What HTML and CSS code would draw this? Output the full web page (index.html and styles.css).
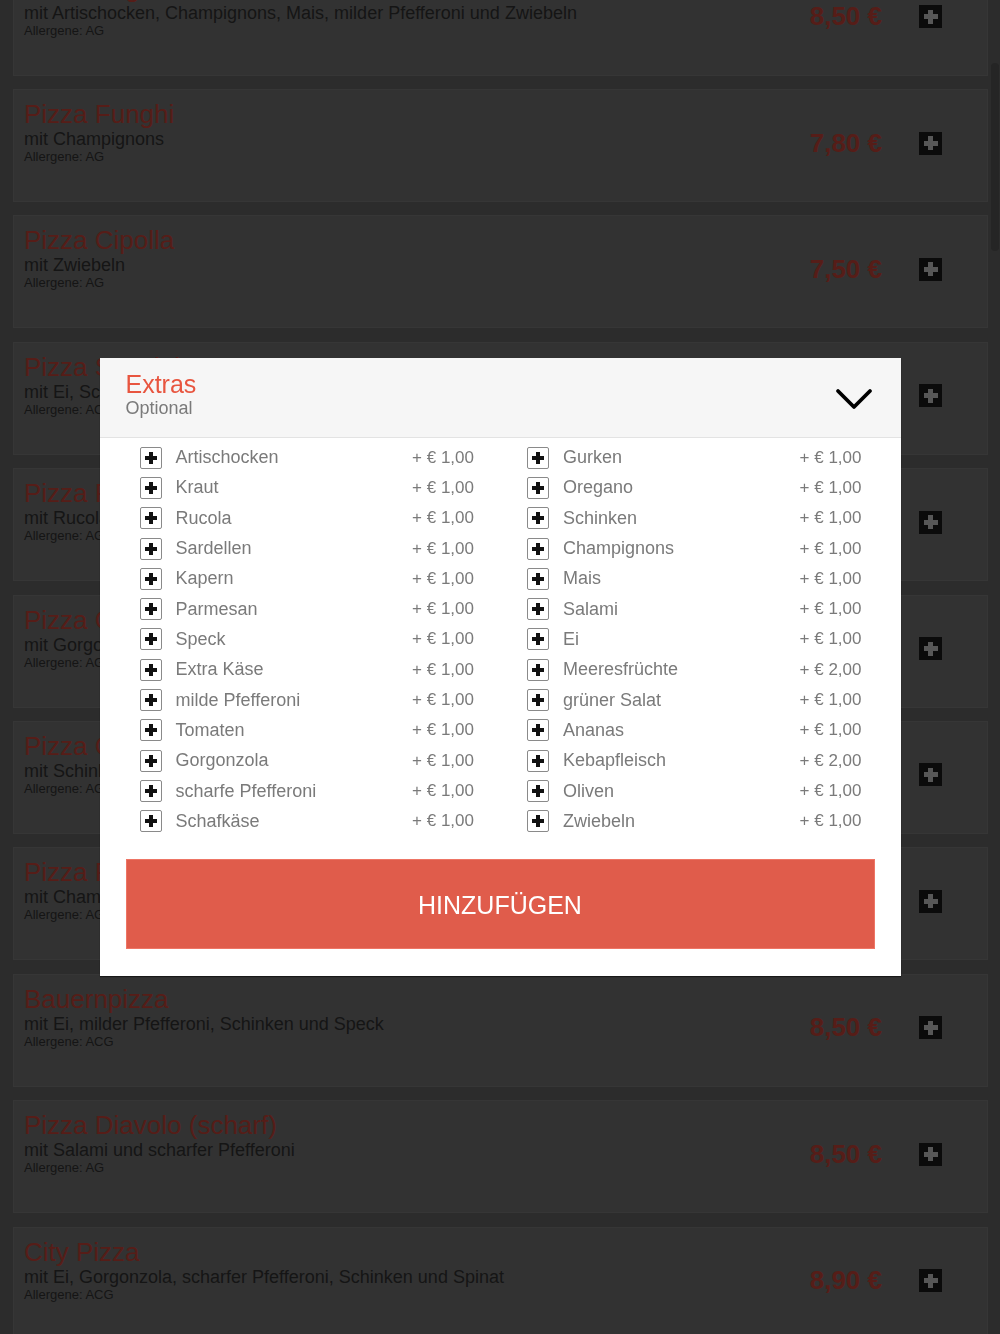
FILE: index.html
```html
<!DOCTYPE html>
<html lang="de">
<head>
    <meta charset="UTF-8">
    <meta name="viewport" content="width=device-width, initial-scale=1.0">
    <title>Pizza Menü</title>
    <link rel="stylesheet" href="styles.css">
</head>
<body>
    <!-- Speisekarte -->
    <main class="menu">
        <div class="card">
            <div class="card-info">
                <h2 class="card-title">Pizza Vegetariana</h2>
                <p class="card-desc">mit Artischocken, Champignons, Mais, milder Pfefferoni und Zwiebeln</p>
                <p class="card-allergen">Allergene: AG</p>
            </div>
            <div class="card-order">
                <span class="card-price">8,50 €</span>
                <button class="card-add" aria-label="Hinzufügen"></button>
            </div>
        </div>
        <div class="card">
            <div class="card-info">
                <h2 class="card-title">Pizza Funghi</h2>
                <p class="card-desc">mit Champignons</p>
                <p class="card-allergen">Allergene: AG</p>
            </div>
            <div class="card-order">
                <span class="card-price">7,80 €</span>
                <button class="card-add" aria-label="Hinzufügen"></button>
            </div>
        </div>
        <div class="card">
            <div class="card-info">
                <h2 class="card-title">Pizza Cipolla</h2>
                <p class="card-desc">mit Zwiebeln</p>
                <p class="card-allergen">Allergene: AG</p>
            </div>
            <div class="card-order">
                <span class="card-price">7,50 €</span>
                <button class="card-add" aria-label="Hinzufügen"></button>
            </div>
        </div>
        <div class="card">
            <div class="card-info">
                <h2 class="card-title">Pizza Speciale</h2>
                <p class="card-desc">mit Ei, Schinken und Speck</p>
                <p class="card-allergen">Allergene: ACG</p>
            </div>
            <div class="card-order">
                <span class="card-price">8,50 €</span>
                <button class="card-add" aria-label="Hinzufügen"></button>
            </div>
        </div>
        <div class="card">
            <div class="card-info">
                <h2 class="card-title">Pizza Rucola</h2>
                <p class="card-desc">mit Rucola und Tomaten</p>
                <p class="card-allergen">Allergene: AG</p>
            </div>
            <div class="card-order">
                <span class="card-price">8,20 €</span>
                <button class="card-add" aria-label="Hinzufügen"></button>
            </div>
        </div>
        <div class="card">
            <div class="card-info">
                <h2 class="card-title">Pizza Gorgonzola</h2>
                <p class="card-desc">mit Gorgonzola</p>
                <p class="card-allergen">Allergene: AG</p>
            </div>
            <div class="card-order">
                <span class="card-price">8,20 €</span>
                <button class="card-add" aria-label="Hinzufügen"></button>
            </div>
        </div>
        <div class="card">
            <div class="card-info">
                <h2 class="card-title">Pizza Cotto</h2>
                <p class="card-desc">mit Schinken</p>
                <p class="card-allergen">Allergene: AG</p>
            </div>
            <div class="card-order">
                <span class="card-price">7,80 €</span>
                <button class="card-add" aria-label="Hinzufügen"></button>
            </div>
        </div>
        <div class="card">
            <div class="card-info">
                <h2 class="card-title">Pizza Prosciutto</h2>
                <p class="card-desc">mit Champignons und Schinken</p>
                <p class="card-allergen">Allergene: AG</p>
            </div>
            <div class="card-order">
                <span class="card-price">8,20 €</span>
                <button class="card-add" aria-label="Hinzufügen"></button>
            </div>
        </div>
        <div class="card">
            <div class="card-info">
                <h2 class="card-title">Bauernpizza</h2>
                <p class="card-desc">mit Ei, milder Pfefferoni, Schinken und Speck</p>
                <p class="card-allergen">Allergene: ACG</p>
            </div>
            <div class="card-order">
                <span class="card-price">8,50 €</span>
                <button class="card-add" aria-label="Hinzufügen"></button>
            </div>
        </div>
        <div class="card">
            <div class="card-info">
                <h2 class="card-title">Pizza Diavolo (scharf)</h2>
                <p class="card-desc">mit Salami und scharfer Pfefferoni</p>
                <p class="card-allergen">Allergene: AG</p>
            </div>
            <div class="card-order">
                <span class="card-price">8,50 €</span>
                <button class="card-add" aria-label="Hinzufügen"></button>
            </div>
        </div>
        <div class="card">
            <div class="card-info">
                <h2 class="card-title">City Pizza</h2>
                <p class="card-desc">mit Ei, Gorgonzola, scharfer Pfefferoni, Schinken und Spinat</p>
                <p class="card-allergen">Allergene: ACG</p>
            </div>
            <div class="card-order">
                <span class="card-price">8,90 €</span>
                <button class="card-add" aria-label="Hinzufügen"></button>
            </div>
        </div>
    </main>

    <!-- Scrollbalken -->
    <div class="scroll-thumb"></div>

    <!-- Extras Dialog -->
    <div class="overlay">
        <div class="modal">
            <div class="modal-head">
                <div>
                    <h3 class="modal-title">Extras</h3>
                    <p class="modal-sub">Optional</p>
                </div>
                <svg class="modal-toggle" width="38" height="22" viewBox="0 0 38 22">
                    <path d="M3 3 L19 19 L35 3" fill="none" stroke="#000" stroke-width="3.8" stroke-linecap="round" stroke-linejoin="round"/>
                </svg>
            </div>

            <ul class="extras">
                <li class="extra"><span class="check"></span><span class="extra-name">Artischocken</span><span class="extra-price">+ € 1,00</span></li>
                <li class="extra"><span class="check"></span><span class="extra-name">Kraut</span><span class="extra-price">+ € 1,00</span></li>
                <li class="extra"><span class="check"></span><span class="extra-name">Rucola</span><span class="extra-price">+ € 1,00</span></li>
                <li class="extra"><span class="check"></span><span class="extra-name">Sardellen</span><span class="extra-price">+ € 1,00</span></li>
                <li class="extra"><span class="check"></span><span class="extra-name">Kapern</span><span class="extra-price">+ € 1,00</span></li>
                <li class="extra"><span class="check"></span><span class="extra-name">Parmesan</span><span class="extra-price">+ € 1,00</span></li>
                <li class="extra"><span class="check"></span><span class="extra-name">Speck</span><span class="extra-price">+ € 1,00</span></li>
                <li class="extra"><span class="check"></span><span class="extra-name">Extra Käse</span><span class="extra-price">+ € 1,00</span></li>
                <li class="extra"><span class="check"></span><span class="extra-name">milde Pfefferoni</span><span class="extra-price">+ € 1,00</span></li>
                <li class="extra"><span class="check"></span><span class="extra-name">Tomaten</span><span class="extra-price">+ € 1,00</span></li>
                <li class="extra"><span class="check"></span><span class="extra-name">Gorgonzola</span><span class="extra-price">+ € 1,00</span></li>
                <li class="extra"><span class="check"></span><span class="extra-name">scharfe Pfefferoni</span><span class="extra-price">+ € 1,00</span></li>
                <li class="extra"><span class="check"></span><span class="extra-name">Schafkäse</span><span class="extra-price">+ € 1,00</span></li>

                <li class="extra"><span class="check"></span><span class="extra-name">Gurken</span><span class="extra-price">+ € 1,00</span></li>
                <li class="extra"><span class="check"></span><span class="extra-name">Oregano</span><span class="extra-price">+ € 1,00</span></li>
                <li class="extra"><span class="check"></span><span class="extra-name">Schinken</span><span class="extra-price">+ € 1,00</span></li>
                <li class="extra"><span class="check"></span><span class="extra-name">Champignons</span><span class="extra-price">+ € 1,00</span></li>
                <li class="extra"><span class="check"></span><span class="extra-name">Mais</span><span class="extra-price">+ € 1,00</span></li>
                <li class="extra"><span class="check"></span><span class="extra-name">Salami</span><span class="extra-price">+ € 1,00</span></li>
                <li class="extra"><span class="check"></span><span class="extra-name">Ei</span><span class="extra-price">+ € 1,00</span></li>
                <li class="extra"><span class="check"></span><span class="extra-name">Meeresfrüchte</span><span class="extra-price">+ € 2,00</span></li>
                <li class="extra"><span class="check"></span><span class="extra-name">grüner Salat</span><span class="extra-price">+ € 1,00</span></li>
                <li class="extra"><span class="check"></span><span class="extra-name">Ananas</span><span class="extra-price">+ € 1,00</span></li>
                <li class="extra"><span class="check"></span><span class="extra-name">Kebapfleisch</span><span class="extra-price">+ € 2,00</span></li>
                <li class="extra"><span class="check"></span><span class="extra-name">Oliven</span><span class="extra-price">+ € 1,00</span></li>
                <li class="extra"><span class="check"></span><span class="extra-name">Zwiebeln</span><span class="extra-price">+ € 1,00</span></li>
            </ul>

            <button class="add-btn">HINZUFÜGEN</button>
        </div>
    </div>
</body>
</html>
```

FILE: styles.css
```css
body {
    font-family: "Liberation Sans", Arial, sans-serif;
    margin: 0;
    padding: 0;
    background-color: #6e6e6e;
    height: 1334px;
    overflow: hidden;
}

/* Speisekarte (unter dem Dialog, leicht gescrollt) */
.menu {
    padding: 0 12px 0 13px;
    margin-top: -37.4px;
}

.card {
    display: flex;
    justify-content: space-between;
    height: 113px;
    box-sizing: border-box;
    padding: 10px 45px 10px 10px;
    margin-bottom: 13.4px;
    background-color: #7d7d7d;
    border: 1px solid #878787;
}

.card-title {
    margin: 0;
    font-size: 26px;
    font-weight: normal;
    line-height: 28px;
    color: #d64a3c;
}

.card-desc {
    margin: 0;
    font-size: 18px;
    line-height: 22px;
    color: #363636;
}

.card-allergen {
    margin: 0;
    font-size: 13px;
    line-height: 14px;
    color: #363636;
}

.card-order {
    display: flex;
    align-items: center;
    gap: 37px;
    align-self: center;
    margin-bottom: 5px;
}

.card-price {
    font-size: 26px;
    font-weight: bold;
    color: #d64a3c;
}

.card-add {
    position: relative;
    width: 23px;
    height: 23px;
    padding: 0;
    border: none;
    background-color: #1c1c1c;
}

.card-add::before,
.card-add::after {
    content: '';
    position: absolute;
    left: 50%;
    top: 50%;
    background-color: #dadada;
}

.card-add::before {
    width: 14px;
    height: 5px;
    margin: -2.5px 0 0 -7px;
}

.card-add::after {
    width: 5px;
    height: 14px;
    margin: -7px 0 0 -2.5px;
}

.scroll-thumb {
    position: fixed;
    top: 63px;
    right: 1px;
    width: 8px;
    height: 188px;
    border-radius: 4px;
    background-color: #5c5c5c;
}

/* Dialog */
.overlay {
    position: fixed;
    top: 0;
    left: 0;
    width: 100%;
    height: 100%;
    background: rgba(0, 0, 0, 0.6);
    display: flex;
    justify-content: center;
    align-items: center;
    z-index: 1000;
}

.modal {
    width: 801px;
    box-sizing: border-box;
    padding-bottom: 27px;
    background: white;
    box-shadow: 0 1px 1px rgba(0, 0, 0, 0.5);
}

.modal-head {
    display: flex;
    justify-content: space-between;
    align-items: center;
    padding: 12px 28px 18px 26px;
    background-color: #f6f6f6;
    border-bottom: 1px solid #e3e3e3;
}

.modal-title {
    margin: 0;
    font-size: 25px;
    font-weight: normal;
    line-height: 28px;
    color: #e8553f;
}

.modal-sub {
    margin: 0;
    font-size: 18px;
    line-height: 21px;
    color: #7a7a7a;
}

.modal-toggle {
    display: block;
    margin-top: 8px;
}

.extras {
    list-style: none;
    margin: 0;
    padding: 4px 39px 0 40px;
    display: grid;
    grid-template-columns: 1fr 1fr;
    grid-template-rows: repeat(13, 30.33px);
    grid-auto-flow: column;
    column-gap: 53px;
}

.extra {
    display: flex;
    align-items: center;
    color: #7a7a7a;
}

.check {
    position: relative;
    flex: none;
    width: 22px;
    height: 22px;
    box-sizing: border-box;
    border: 1.5px solid #8a8a8a;
    border-radius: 2px;
}

.check::before,
.check::after {
    content: '';
    position: absolute;
    left: 50%;
    top: 50%;
    background-color: #111;
}

.check::before {
    width: 12px;
    height: 4px;
    margin: -2px 0 0 -6px;
}

.check::after {
    width: 4px;
    height: 12px;
    margin: -6px 0 0 -2px;
}

.extra-name {
    margin-left: 14px;
    font-size: 18px;
}

.extra-price {
    margin-left: auto;
    font-size: 17px;
}

.add-btn {
    display: block;
    width: calc(100% - 52px);
    height: 90px;
    margin: 22px 26px 0;
    padding-top: 4px;
    border: 1px solid #ee7565;
    background-color: #e05c4b;
    color: white;
    font-family: inherit;
    font-size: 25px;
    cursor: pointer;
}
```
